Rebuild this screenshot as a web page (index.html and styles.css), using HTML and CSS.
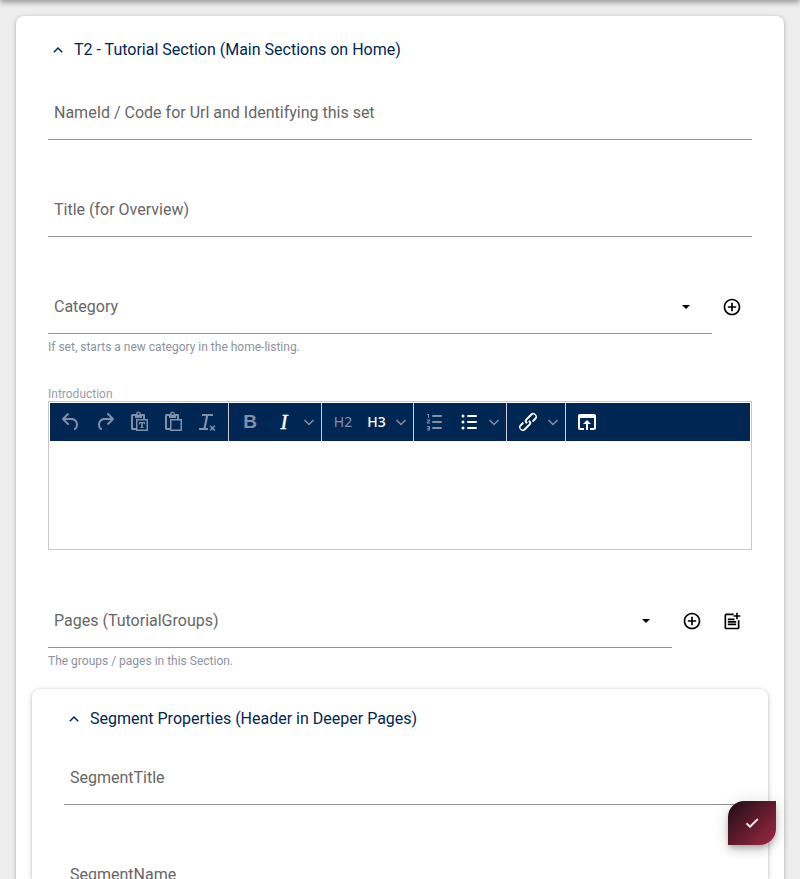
FILE: index.html
```html
<!DOCTYPE html>
<html lang="en">
<head>
<meta charset="utf-8">
<title>Edit item</title>
<link rel="stylesheet" href="styles.css">
</head>
<body>
<div class="topbar"></div>
<main class="card">
  <h2 class="heading"><svg class="collapse" viewBox="0 0 10 10"><path d="M.8 7.2 5 3l4.2 4.2"/></svg>T2 - Tutorial Section (Main Sections on Home)</h2>
  <div class="field"><div class="control">NameId / Code for Url and Identifying this set</div></div>
  <div class="field"><div class="control">Title (for Overview)</div></div>
  <div class="field">
    <div class="row">
      <div class="control">Category<i class="arrow"></i></div>
      <button class="action"><svg viewBox="0 0 24 24"><path d="M13 7h-2v4H7v2h4v4h2v-4h4v-2h-4V7zm-1-5C6.48 2 2 6.48 2 12s4.480 10 10 10 10-4.480 10-10S17.520 2 12 2zm0 18c-4.410 0-8-3.590-8-8s3.590-8 8-8 8 3.590 8 8-3.590 8-8 8z"/></svg></button>
    </div>
    <p class="hint">If set, starts a new category in the home-listing.</p>
  </div>
  <div class="editor-label">Introduction</div>
  <section class="editor">
    <div class="toolbar">
      <div class="group history">
        <span class="tool off undo"><svg viewBox="0 0 24 24"><path d="M6.400 8H12c3.700 0 6.200 2 6.800 5.100.6 2.700-.4 5.600-2.300 6.800a1 1 0 0 1-1-1.800c1.100-.6 1.800-2.700 1.400-4.600-.5-2.100-2.100-3.500-4.900-3.500H6.400l3.300 3.300a1 1 0 1 1-1.400 1.400l-5-5a1 1 0 0 1 0-1.400l5-5a1 1 0 0 1 1.400 1.400L6.400 8Z"/></svg></span>
        <span class="tool off redo"><svg viewBox="0 0 24 24"><path d="M17.600 10H12c-2.800 0-4.400 1.400-4.900 3.500-.4 2 .3 4 1.400 4.600a1 1 0 1 1-1 1.800c-2-1.200-2.900-4.100-2.300-6.800.6-3 3-5.100 6.800-5.100h5.600l-3.300-3.300a1 1 0 1 1 1.400-1.400l5 5a1 1 0 0 1 0 1.400l-5 5a1 1 0 0 1-1.400-1.400l3.300-3.300Z"/></svg></span>
        <span class="tool off"><svg viewBox="0 0 24 24"><path fill-rule="evenodd" d="M18 9V5a1 1 0 0 0-1-1h-3a2.500 2.500 0 0 0-5 0H5.500a1.500 1.500 0 0 0-1.500 1.500v13A1.500 1.500 0 0 0 5.500 20H9v1h12V9h-3zM11.500 2.700a1 1 0 1 1 0 2 1 1 0 0 1 0-2zM9 18H6V6h2v2h7V6h1v3H9v9zm1.500-7.500h9v9h-9z"/><path d="M12 12h6v2.300h-1l-.3-1h-.9v3.600l.8.300v.8h-3.200v-.8l.8-.3v-3.600h-.9l-.3 1h-1z"/></svg></span>
        <span class="tool off"><svg viewBox="0 0 24 24"><path fill-rule="evenodd" d="M18 9V5a1 1 0 0 0-1-1h-3a2.500 2.500 0 0 0-5 0H5.500a1.500 1.500 0 0 0-1.500 1.500v13A1.500 1.500 0 0 0 5.500 20H9v1h12V9h-3zM11.500 2.700a1 1 0 1 1 0 2 1 1 0 0 1 0-2zM9 18H6V6h2v2h7V6h1v3H9v9zm1.500-7.500h9v9h-9z"/></svg></span>
        <span class="tool off"><svg viewBox="0 0 24 24"><path d="M13.200 6 10.700 18H8.500L11 6H7V4h11v2h-4.800zM4 18h9v2H4zM15.600 15.300l1.900 1.700 1.900-1.700 1 1-1.700 1.800 1.700 1.800-1 1-1.900-1.700-1.900 1.700-1-1 1.700-1.800-1.700-1.800z"/></svg></span>
      </div>
      <div class="group style">
        <span class="tool off bold">B</span><span class="tool italic">I</span><span class="more"><svg viewBox="0 0 10 10"><path d="m.5 3 4.500 4.500L9.500 3"/></svg></span>
      </div>
      <div class="group titles">
        <span class="tool off h2">H2</span><span class="tool h3">H3</span><span class="more"><svg viewBox="0 0 10 10"><path d="m.5 3 4.500 4.500L9.500 3"/></svg></span>
      </div>
      <div class="group style">
        <span class="tool off"><svg viewBox="0 0 24 24"><path d="M10 17h8a1 1 0 0 1 0 2h-8a1 1 0 0 1 0-2zm0-6h8a1 1 0 0 1 0 2h-8a1 1 0 0 1 0-2zm0-6h8a1 1 0 0 1 0 2h-8a1 1 0 1 1 0-2zM6 4v3.500a.5.500 0 0 1-1 0V5H4.500a.5.500 0 0 1 0-1H6zM5 12.200v.3h1.500a.5.500 0 0 1 0 1H4v-1.800l2-1v-.2H4.500a.5.500 0 0 1 0-1H7v1.700l-2 1zM7 16v4.500H4.400a.4.400 0 1 1 0-.9h1.500v-.9H4.400a.4.400 0 1 1 0-.9h1.500v-.9H4.400a.4.400 0 1 1 0-.9H7z"/></svg></span>
        <span class="tool"><svg viewBox="0 0 24 24"><path d="M11 5h8a1 1 0 0 1 0 2h-8a1 1 0 0 1 0-2zm0 6h8a1 1 0 0 1 0 2h-8a1 1 0 0 1 0-2zm0 6h8a1 1 0 0 1 0 2h-8a1 1 0 0 1 0-2zM4.500 6a1.500 1.500 0 1 1 3 0 1.500 1.500 0 0 1-3 0zm0 6a1.500 1.500 0 1 1 3 0 1.500 1.500 0 0 1-3 0zm0 6a1.500 1.500 0 1 1 3 0 1.500 1.500 0 0 1-3 0z"/></svg></span><span class="more"><svg viewBox="0 0 10 10"><path d="m.5 3 4.500 4.500L9.500 3"/></svg></span>
      </div>
      <div class="group link">
        <span class="tool"><svg viewBox="0 0 24 24"><path d="M6.200 12.300a1 1 0 0 1 1.400 1.400l-2 2a2 2 0 1 0 2.600 2.800l4.800-4.800a1 1 0 0 0 0-1.400 1 1 0 1 1 1.400-1.300 2.900 2.900 0 0 1 0 4L9.600 20a3.900 3.900 0 0 1-5.500-5.500l2-2Zm11.600-.6a1 1 0 0 1-1.400-1.400l2-2a2 2 0 1 0-2.600-2.800L11 10.300a1 1 0 0 0 0 1.400A1 1 0 1 1 9.600 13a2.900 2.900 0 0 1 0-4L14.400 4a3.900 3.900 0 0 1 5.500 5.500l-2 2Z"/></svg></span><span class="more"><svg viewBox="0 0 10 10"><path d="m.5 3 4.500 4.500L9.500 3"/></svg></span>
      </div>
      <div class="group open">
        <span class="tool"><svg viewBox="0 0 24 24"><path d="M19 4H5c-1.110 0-2 .9-2 2v12c0 1.100.89 2 2 2h4v-2H5V8h14v10h-4v2h4c1.100 0 2-.9 2-2V6c0-1.100-.89-2-2-2zm-7 6-4 4h3v6h2v-6h3l-4-4z"/></svg></span>
      </div>
    </div>
  </section>
  <div class="field pages">
    <div class="row">
      <div class="control">Pages (TutorialGroups)<i class="arrow"></i></div>
      <button class="action"><svg viewBox="0 0 24 24"><path d="M13 7h-2v4H7v2h4v4h2v-4h4v-2h-4V7zm-1-5C6.480 2 2 6.480 2 12s4.480 10 10 10 10-4.480 10-10S17.520 2 12 2zm0 18c-4.410 0-8-3.590-8-8s3.590-8 8-8 8 3.590 8 8-3.590 8-8 8z"/></svg></button>
      <button class="action"><svg viewBox="0 0 24 24"><path d="M19 20H5V5h9V3H5a2 2 0 0 0-2 2v15a2 2 0 0 0 2 2h14a2 2 0 0 0 2-2v-9h-2v9zM17 2h2v3h3v2h-3v3h-2V7h-3V5h3zM7 9h8v2H7zM7 12h10v2H7zM7 15h10v2H7z"/></svg></button>
    </div>
    <p class="hint">The groups / pages in this Section.</p>
  </div>
  <section class="card inner">
    <h2 class="heading"><svg class="collapse" viewBox="0 0 10 10"><path d="M.8 7.200 5 3l4.200 4.200"/></svg>Segment Properties (Header in Deeper Pages)</h2>
    <div class="field"><div class="control">SegmentTitle</div></div>
    <div class="field last"><div class="control">SegmentName</div></div>
  </section>
</main>
<button class="save"><svg viewBox="0 0 24 24"><path d="M9 16.170 4.830 12l-1.420 1.410L9 19 21 7l-1.410-1.410z"/></svg></button>
</body>
</html>
```
FILE: styles.css
```css
* { box-sizing: border-box; }
html, body { height: 100%; }
body {
  margin: 0;
  padding: 16px 16px 0;
  background: #eee;
  font: 16px/24px Roboto, sans-serif;
  overflow: hidden;
}
.topbar {
  position: fixed;
  top: -10px;
  left: 0;
  right: 0;
  height: 10px;
  box-shadow: 0 2px 4px -1px rgba(0,0,0,.2), 0 4px 5px rgba(0,0,0,.14), 0 1px 10px rgba(0,0,0,.12);
}
.card {
  height: 900px;
  padding: 22px 32px 0;
  background: #fff;
  border-radius: 8px;
  box-shadow: 0 1px 4px rgba(0,0,0,.3);
}
.heading {
  display: flex;
  align-items: center;
  gap: 11px;
  height: 24px;
  margin: 0 0 22px;
  padding-left: 5px;
  color: #002653;
  font-size: 16px;
  font-weight: 400;
}
.collapse {
  width: 10px;
  height: 10px;
  fill: none;
  stroke: #002653;
  stroke-width: 1.5;
}
.field { height: 97px; }
.control {
  display: flex;
  flex: 1;
  align-items: center;
  justify-content: space-between;
  height: 56px;
  padding: 2px 22px 0 6px;
  border-bottom: 1px solid #949494;
  color: #666;
}
.row { display: flex; }
.arrow {
  border: 4px solid transparent;
  border-top-color: #000;
  border-bottom: 0;
}
.action {
  display: grid;
  place-items: center;
  width: 40px;
  height: 56px;
  padding: 1px 0 0;
  border: 0;
  background: none;
}
.action svg { width: 20px; height: 20px; }
.hint {
  margin: 4px 0 0;
  color: #8d91a0;
  font-size: 12px;
  line-height: 18px;
}
.editor-label {
  height: 26px;
  padding-top: 11px;
  color: #999ba8;
  font-size: 12px;
  line-height: 16px;
}
.editor {
  height: 149px;
  border: 1px solid #c8c8c8;
  padding: 1px;
}
.toolbar {
  display: flex;
  height: 38px;
  background: #002653;
  color: #fff;
}
.group {
  display: flex;
  align-items: center;
  flex: none;
  padding-left: 4px;
  border-right: 1px solid #ccc;
}
.history { width: 179px; }
.style { width: 93px; }
.titles { width: 92px; }
.link { width: 59px; }
.open { border: 0; }
.tool {
  display: grid;
  place-items: center;
  flex: none;
  width: 34px;
  height: 34px;
  line-height: 34px;
}
.tool svg { width: 24px; height: 24px; fill: currentColor; }
.off { color: #8090a7; }
.bold { font: 700 19px/34px "Liberation Sans", sans-serif; }
.italic { font: italic 400 21px/34px "Liberation Serif", serif; -webkit-text-stroke: .4px #fff; }
.h2, .h3 { font: 14px/34px "Noto Sans", sans-serif; }
.h3 { width: 33px; font-weight: 500; }
.more { display: grid; width: 16px; place-items: center; }
.more svg { width: 10px; height: 10px; fill: none; stroke: #8090a7; stroke-width: 1.5; }
.pages { margin-top: 42px; }
.inner {
  height: 191px;
  margin: 0 -16px;
  padding-top: 18px;
  border-radius: 8px 8px 0 0;
}
.inner .heading { margin-bottom: 18px; }
.inner .last { height: 56px; }
.save {
  position: fixed;
  right: 24px;
  bottom: 34px;
  display: grid;
  place-items: center;
  width: 48px;
  height: 44px;
  padding: 0;
  border: 0;
  border-radius: 16px 0;
  background: linear-gradient(135deg, #1d0c14, #a02846);
  box-shadow: 0 3px 5px -1px rgba(0,0,0,.2), 0 6px 10px rgba(0,0,0,.14), 0 1px 18px rgba(0,0,0,.12);
}
.save svg { width: 16px; height: 16px; fill: #fff; stroke: #fff; }
```
